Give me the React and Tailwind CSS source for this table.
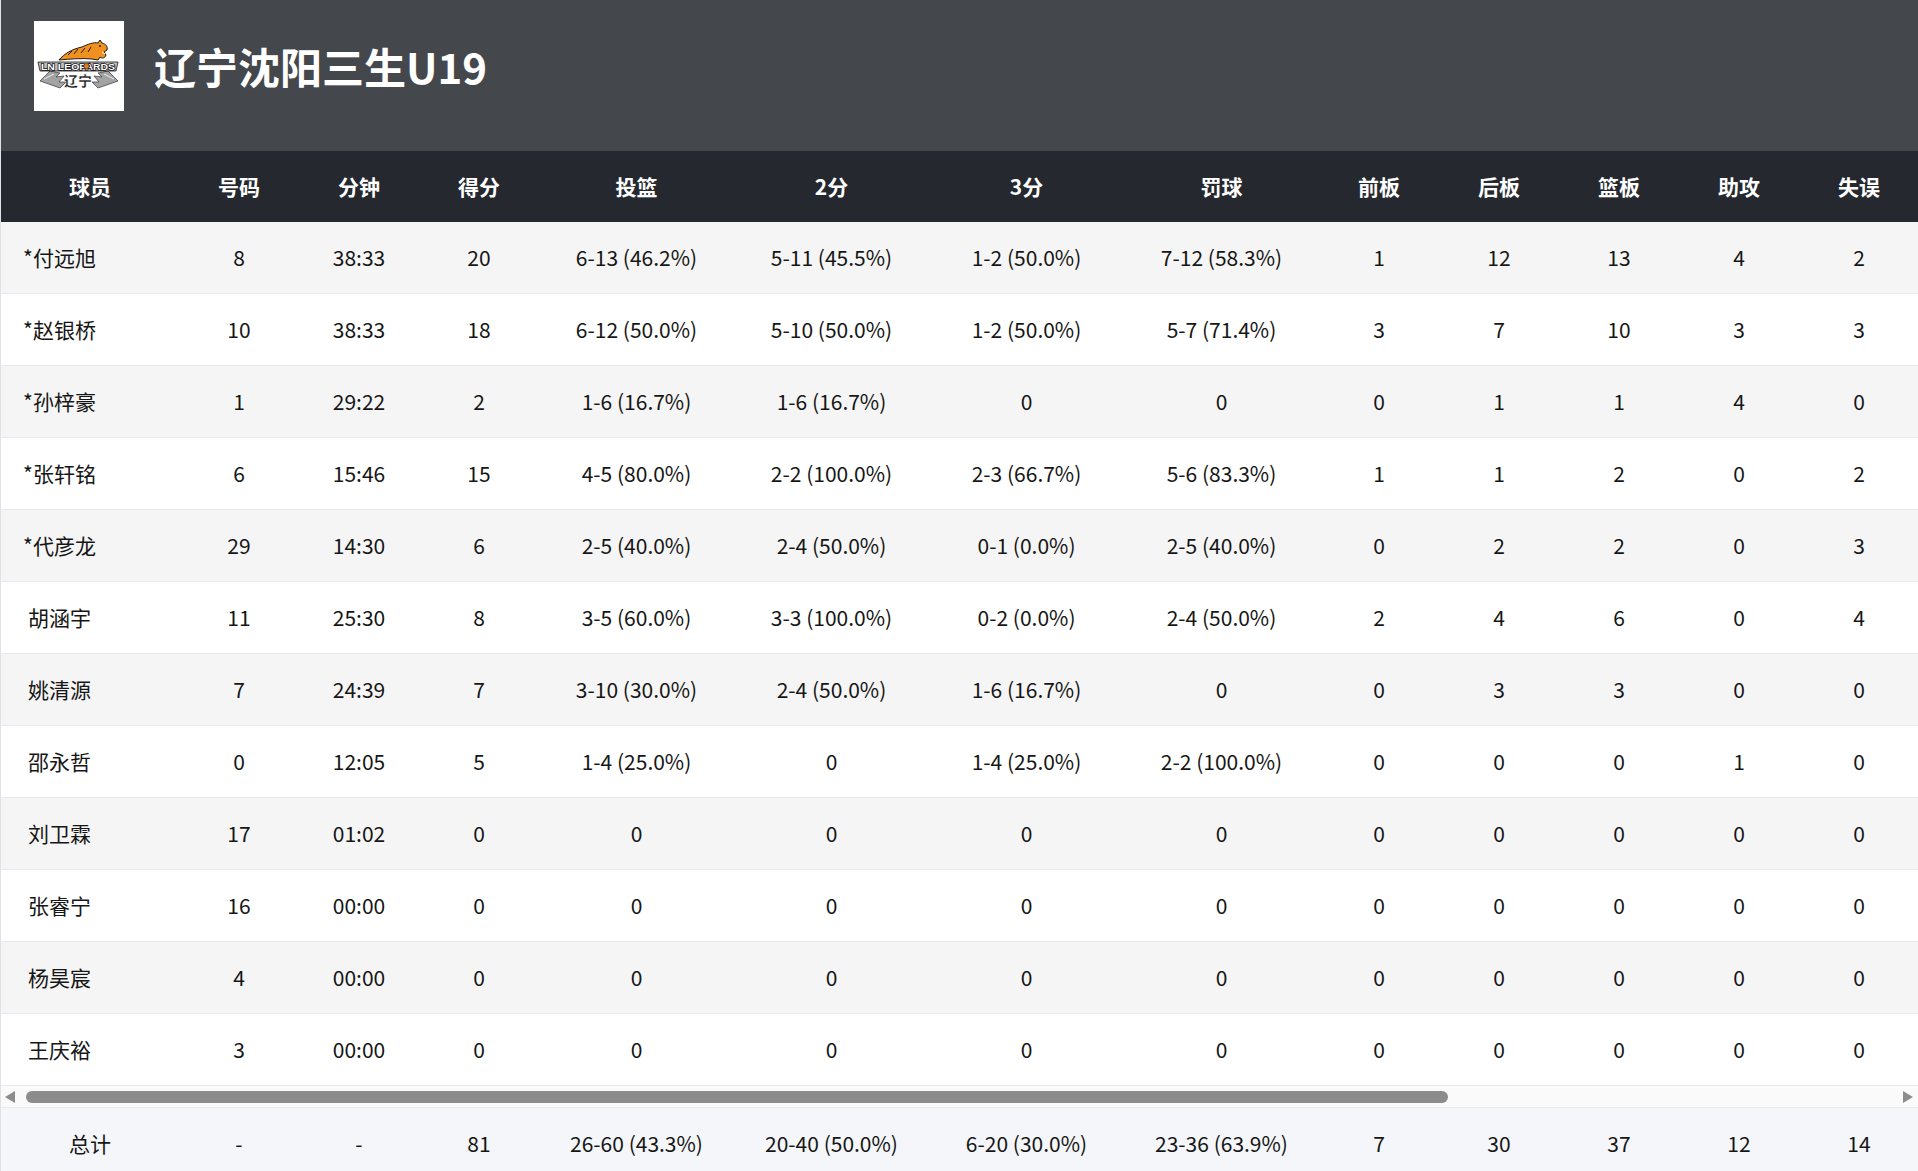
const columns = [
  { key: 'name', label: '球员', w: 'w-[178px]' },
  { key: 'no', label: '号码', w: 'w-[120px]' },
  { key: 'min', label: '分钟', w: 'w-[120px]' },
  { key: 'pts', label: '得分', w: 'w-[120px]' },
  { key: 'fg', label: '投篮', w: 'w-[195px]' },
  { key: 'p2', label: '2分', w: 'w-[195px]' },
  { key: 'p3', label: '3分', w: 'w-[195px]' },
  { key: 'ft', label: '罚球', w: 'w-[195px]' },
  { key: 'oreb', label: '前板', w: 'w-[120px]' },
  { key: 'dreb', label: '后板', w: 'w-[120px]' },
  { key: 'reb', label: '篮板', w: 'w-[120px]' },
  { key: 'ast', label: '助攻', w: 'w-[120px]' },
  { key: 'tov', label: '失误', w: 'w-[120px]' },
];

const players = [
  ['*付远旭', '8', '38:33', '20', '6-13 (46.2%)', '5-11 (45.5%)', '1-2 (50.0%)', '7-12 (58.3%)', '1', '12', '13', '4', '2'],
  ['*赵银桥', '10', '38:33', '18', '6-12 (50.0%)', '5-10 (50.0%)', '1-2 (50.0%)', '5-7 (71.4%)', '3', '7', '10', '3', '3'],
  ['*孙梓豪', '1', '29:22', '2', '1-6 (16.7%)', '1-6 (16.7%)', '0', '0', '0', '1', '1', '4', '0'],
  ['*张轩铭', '6', '15:46', '15', '4-5 (80.0%)', '2-2 (100.0%)', '2-3 (66.7%)', '5-6 (83.3%)', '1', '1', '2', '0', '2'],
  ['*代彦龙', '29', '14:30', '6', '2-5 (40.0%)', '2-4 (50.0%)', '0-1 (0.0%)', '2-5 (40.0%)', '0', '2', '2', '0', '3'],
  ['胡涵宇', '11', '25:30', '8', '3-5 (60.0%)', '3-3 (100.0%)', '0-2 (0.0%)', '2-4 (50.0%)', '2', '4', '6', '0', '4'],
  ['姚清源', '7', '24:39', '7', '3-10 (30.0%)', '2-4 (50.0%)', '1-6 (16.7%)', '0', '0', '3', '3', '0', '0'],
  ['邵永哲', '0', '12:05', '5', '1-4 (25.0%)', '0', '1-4 (25.0%)', '2-2 (100.0%)', '0', '0', '0', '1', '0'],
  ['刘卫霖', '17', '01:02', '0', '0', '0', '0', '0', '0', '0', '0', '0', '0'],
  ['张睿宁', '16', '00:00', '0', '0', '0', '0', '0', '0', '0', '0', '0', '0'],
  ['杨昊宸', '4', '00:00', '0', '0', '0', '0', '0', '0', '0', '0', '0', '0'],
  ['王庆裕', '3', '00:00', '0', '0', '0', '0', '0', '0', '0', '0', '0', '0'],
];

const totals = ['总计', '-', '-', '81', '26-60 (43.3%)', '20-40 (50.0%)', '6-20 (30.0%)', '23-36 (63.9%)', '7', '30', '37', '12', '14'];

function Logo() {
  return (
    <svg viewBox="0 0 90 90" className="h-[90px] w-[90px] shrink-0 bg-white">
      {/* wings */}
      <path d="M6 60 L16 50 L26 52 L22 56 L30 55 L25 61 L32 61 L26 67 Z" fill="#a3a3a3" stroke="#333" strokeWidth="0.7" />
      <path d="M84 60 L74 50 L64 52 L68 56 L60 55 L65 61 L58 61 L64 67 Z" fill="#a3a3a3" stroke="#333" strokeWidth="0.7" />
      <path d="M10 58 L20 53 M80 58 L70 53" stroke="#fff" strokeWidth="0.8" />
      {/* leopard */}
      <path
        d="M25 39 C30 33 38 28 48 26 C54 23 60 21 64 22 L66 19 L68 22 C72 23 74 26 73 29 L70 31 L72 34 C71 37 68 38 66 36 L64 39 L58 38 C48 37 36 38 25 39 Z"
        fill="#f0901f"
        stroke="#1a1a1a"
        strokeWidth="1"
      />
      <path d="M34 34 L38 30 M40 33 L44 28 M47 32 L51 27 M54 31 L57 26" stroke="#1a1a1a" strokeWidth="1" fill="none" />
      <path d="M68 31 L71 33" stroke="#fff" strokeWidth="1" />
      <circle cx="66" cy="25" r="0.9" fill="#1a1a1a" />
      {/* banner */}
      <path d="M4 41 L84 41 L82 50 L6 50 Z" fill="#bdbdbd" stroke="#1a1a1a" strokeWidth="0.8" />
      <text
        x="44"
        y="48.6"
        textAnchor="middle"
        fontSize="9"
        fontWeight="900"
        fontFamily="'Liberation Sans', sans-serif"
        fill="#fff"
        stroke="#111"
        strokeWidth="1.4"
        paintOrder="stroke"
        textLength="74"
        lengthAdjust="spacingAndGlyphs"
      >
        LN LEOPARDS
      </text>
      <circle cx="52.5" cy="45.2" r="2.8" fill="#e07a20" stroke="#111" strokeWidth="0.6" />
      {/* 辽宁 */}
      <text
        x="44"
        y="65"
        textAnchor="middle"
        fontSize="14"
        fontWeight="900"
        fontFamily="'Noto Sans CJK SC', sans-serif"
        fill="#111"
        stroke="#fff"
        strokeWidth="0.5"
      >
        辽宁
      </text>
    </svg>
  );
}

function Row({ cells, className, nameWide }) {
  return (
    <div className={`flex h-[72px] items-center border-b border-[#e8eaf0] ${className}`}>
      {columns.map((col, i) => (
        <div key={col.key} className={`${col.w} shrink-0 text-center`}>
          {i === 0 && !nameWide ? (
            <div className="w-[117px] text-center">{cells[0]}</div>
          ) : (
            cells[i]
          )}
        </div>
      ))}
    </div>
  );
}

export default function App() {
  return (
    <div className="h-[1171px] w-[1918px] overflow-hidden border-l border-[#dfe2e8] bg-white font-['Noto_Sans_CJK_SC',sans-serif] text-[#161616]">
      <header className="flex h-[151px] items-start bg-[#44474b] pl-[33px] pt-[21px]">
        <Logo />
        <div className="ml-[30px] flex h-[90px] items-center text-[42px] font-bold leading-none text-white">
          辽宁沈阳三生U19
        </div>
      </header>

      <div className="overflow-hidden">
        <div className="w-[2000px]">
          <div className="flex h-[71px] items-center bg-[#25292f] text-[21px] font-bold text-white">
            {columns.map((col) => (
              <div key={col.key} className={`${col.w} shrink-0 text-center`}>
                {col.label}
              </div>
            ))}
          </div>
          <div className="text-[21px]">
            {players.map((p, idx) => (
              <Row key={p[0]} cells={p} className={idx % 2 === 0 ? 'bg-[#f5f5f5]' : 'bg-white'} />
            ))}
          </div>
        </div>
      </div>

      {/* horizontal scrollbar */}
      <div className="flex h-[22px] items-center border-b border-[#e8eaf0] bg-[#fafafa]">
        <svg viewBox="0 0 10 12" className="ml-[4px] h-[12px] w-[10px] text-[#8c8c8c]">
          <path d="M10 0 L10 12 L0 6 Z" fill="currentColor" />
        </svg>
        <div className="ml-[11px] h-[12px] w-[1422px] rounded-full bg-[#8c8c8c]" />
        <div className="flex-1" />
        <svg viewBox="0 0 10 12" className="mr-[5px] h-[12px] w-[10px] text-[#8c8c8c]">
          <path d="M0 0 L0 12 L10 6 Z" fill="currentColor" />
        </svg>
      </div>

      <div className="overflow-hidden">
        <div className="w-[2000px] text-[21px]">
          <Row cells={totals} className="border-b-0 bg-[#f5f6fa]" nameWide />
        </div>
      </div>
    </div>
  );
}
